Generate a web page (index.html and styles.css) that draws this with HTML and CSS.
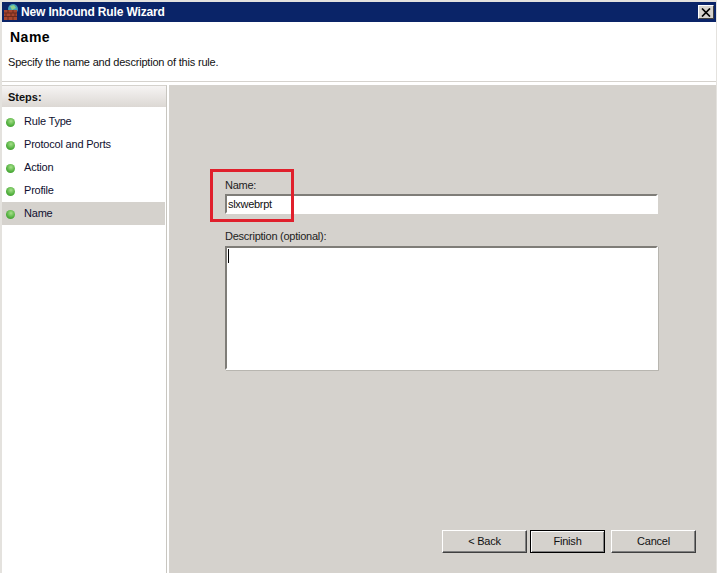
FILE: index.html
```
<!DOCTYPE html>
<html lang="en">
<head>
<meta charset="utf-8">
<title>New Inbound Rule Wizard</title>
<link rel="stylesheet" href="styles.css">
</head>
<body>
<div class="window">
  <div class="titlebar">
    <svg class="app-icon" width="17" height="18" viewBox="0 0 17 18">
      <circle cx="10" cy="6" r="5" fill="#3f9fb8"/>
      <path d="M7 3 L11 2 L13 5 L9 7Z" fill="#8fd08a"/>
      <rect x="1" y="7" width="13" height="10" fill="#a8452e"/>
      <path d="M1 10H14M1 13.500H14M5 7V10M10 7V10M3 10V13.500M8 10V13.500M12 10V13.500M5 13.500V17M10 13.500V17" stroke="#6b2a1c" stroke-width="1" fill="none"/>
    </svg>
    <span class="title-text">New Inbound Rule Wizard</span>
    <button class="close-btn" type="button" aria-label="Close">
      <svg width="10" height="9" viewBox="0 0 10 9"><path d="M1 0.500L9 8.500M9 0.500L1 8.500" stroke="#000" stroke-width="1.700" fill="none"/></svg>
    </button>
  </div>
  <header class="page-head">
    <h1 class="page-title">Name</h1>
    <p class="page-desc">Specify the name and description of this rule.</p>
  </header>
  <div class="body-area">
    <aside class="steps">
      <div class="steps-head">Steps:</div>
      <ul class="steps-list">
        <li class="step"><span class="dot"></span>Rule Type</li>
        <li class="step"><span class="dot"></span>Protocol and Ports</li>
        <li class="step"><span class="dot"></span>Action</li>
        <li class="step"><span class="dot"></span>Profile</li>
        <li class="step step-current"><span class="dot"></span>Name</li>
      </ul>
    </aside>
    <main class="content">
      <div class="form">
        <div class="field-name">
          <label class="field-label" for="rule-name">Name:</label>
          <input class="text-input" id="rule-name" type="text" value="slxwebrpt">
          <div class="highlight"></div>
        </div>
        <div class="field-desc">
          <label class="field-label" for="rule-desc">Description (optional):</label>
          <div class="text-area" id="rule-desc"><span class="caret"></span></div>
        </div>
      </div>
      <div class="actions">
        <button class="btn" type="button">&lt; Back</button>
        <button class="btn btn-default" type="button">Finish</button>
        <button class="btn btn-cancel" type="button">Cancel</button>
      </div>
    </main>
  </div>
</div>
</body>
</html>
```
FILE: styles.css
```
* { box-sizing: border-box; }
html, body { margin: 0; padding: 0; }
body {
  width: 717px;
  height: 573px;
  overflow: hidden;
  background: #fff;
  font-family: "Liberation Sans", Arial, sans-serif;
  font-size: 11px;
  color: #111;
}
.window {
  width: 717px;
  height: 573px;
  display: flex;
  flex-direction: column;
  padding: 2px 1px 0 2px;
  background: #e4e2de;
}
.titlebar {
  height: 20px;
  flex: none;
  display: flex;
  align-items: center;
  background: #0a2468;
  position: relative;
  padding-right: 2px;
}
.app-icon { flex: none; margin: 0 1px 0 1px; }
.title-text { color: #fff; font-weight: bold; font-size: 12px; flex: 1; letter-spacing: -0.15px; }
.close-btn {
  width: 16px;
  height: 14px;
  padding: 0;
  display: flex;
  align-items: center;
  justify-content: center;
  background: #d5d2cd;
  border: 1px solid;
  border-color: #fff #404040 #404040 #fff;
}
.page-head {
  height: 60px;
  flex: none;
  background: #fff;
  padding: 7px 0 0 6px;
  border-bottom: 1px solid #d5d2cd;
}
.page-title { margin: 0; font-size: 14px; line-height: 16px; font-weight: bold; padding-left: 2px; color: #000; letter-spacing: 0.5px; }
.page-desc { margin: 10px 0 0; font-size: 11px; line-height: 14px; letter-spacing: -0.2px; }
.body-area { flex: 1; display: flex; padding-top: 3px; background: #fff; min-height: 0; }
.steps {
  width: 165px;
  flex: none;
  background: #fff;
  border-right: 1px solid #c8c6c0;
  border-top: 1px solid #d5d2cd;
}
.steps-head {
  height: 21px;
  display: flex;
  align-items: center;
  padding-left: 6px;
  font-weight: bold;
  color: #111;
  background: linear-gradient(#f6f4f3, #dcd8d4);
}
.steps-list { list-style: none; margin: 3px 0 0; padding: 0; }
.step {
  height: 23px;
  display: flex;
  align-items: center;
  padding: 0 0 1px 4px;
  color: #101030;
  width: 163px;
  letter-spacing: -0.2px;
}
.step-current { background: #d5d2cd; }
.dot {
  width: 9px;
  height: 9px;
  border-radius: 50%;
  margin: 2px 9px 0 0;
  flex: none;
  background: radial-gradient(circle at 55% 35%, #a6e08a, #4fae3c 60%, #3d8f30);
}
.content {
  flex: 1;
  margin-left: 2px;
  background: #d5d2cd;
  display: flex;
  flex-direction: column;
  justify-content: space-between;
  padding: 93px 20px 20px 56px;
}
.form { display: flex; flex-direction: column; width: 433px; }
.field-name { position: relative; height: 36px; }
.field-label { display: block; height: 16px; line-height: 15px; color: #222; letter-spacing: -0.25px; }
.text-input {
  display: block;
  width: 433px;
  height: 20px;
  padding: 0 1px;
  font: 11px "Liberation Sans", Arial, sans-serif;
  letter-spacing: -0.3px;
  color: #111;
  background: #fff;
  border: 2px solid;
  border-color: #7f7d78 #fff #fff #7f7d78;
  outline: none;
}
.highlight {
  position: absolute;
  left: -15px;
  top: -9px;
  width: 84px;
  height: 53px;
  border: 3px solid #e0202c;
  pointer-events: none;
}
.field-desc { margin-top: 15px; }
.text-area {
  height: 124px;
  width: 433px;
  margin-top: 1px;
  background: #fff;
  border: 2px solid;
  border-color: #7f7d78 #fff #fff #7f7d78;
  box-shadow: 1px 1px 0 #b8b6b0;
  padding: 1px 1px;
}
.caret { display: block; width: 1px; height: 14px; background: #000; }
.actions { display: flex; justify-content: flex-end; }
.btn {
  width: 85px;
  height: 23px;
  padding: 0 0 2px;
  font: 11px "Liberation Sans", Arial, sans-serif;
  letter-spacing: -0.2px;
  color: #111;
  background: #d5d2cd;
  border: 1px solid;
  border-color: #fff #404040 #404040 #fff;
  box-shadow: inset -1px -1px 0 #808080;
}
.btn-default { width: 75px; margin-left: 3px; border: 1px solid #000; box-shadow: inset 1px 1px 0 #fff, inset -1px -1px 0 #808080; }
.btn-cancel { margin-left: 6px; }
```
